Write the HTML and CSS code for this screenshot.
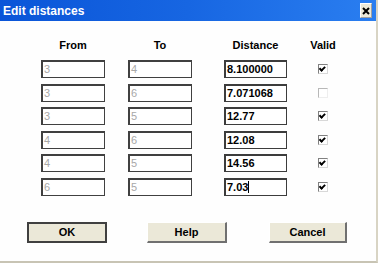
FILE: index.html
```html
<!DOCTYPE html>
<html>
<head>
<meta charset="utf-8">
<link rel="stylesheet" href="styles.css">
</head>
<body>
<div class="window">
  <div class="titlebar">
    <span class="title">Edit distances</span>
    <span class="close">
      <svg width="8" height="8" viewBox="0 0 8 8"><path d="M1 1 L7 7 M7 1 L1 7" stroke="#000" stroke-width="2"/></svg>
    </span>
  </div>
  <div class="content">
    <div class="table">
      <div class="hdr w-ft">From</div>
      <div class="hdr w-ft">To</div>
      <div class="hdr w-d">Distance</div>
      <div class="hdr w-v">Valid</div>

      <div class="box dis w-ft">3</div><div class="box dis w-ft">4</div><div class="box w-d">8.100000</div><div class="cb on"></div>
      <div class="box dis w-ft">3</div><div class="box dis w-ft">6</div><div class="box w-d">7.071068</div><div class="cb off"></div>
      <div class="box dis w-ft">3</div><div class="box dis w-ft">5</div><div class="box w-d">12.77</div><div class="cb on"></div>
      <div class="box dis w-ft">4</div><div class="box dis w-ft">6</div><div class="box w-d">12.08</div><div class="cb on"></div>
      <div class="box dis w-ft">4</div><div class="box dis w-ft">5</div><div class="box w-d">14.56</div><div class="cb on"></div>
      <div class="box dis w-ft">6</div><div class="box dis w-ft">5</div><div class="box w-d">7.03<span class="caret"></span></div><div class="cb on"></div>
    </div>
    <div class="buttons">
      <div class="btn default">OK</div>
      <div class="btn">Help</div>
      <div class="btn cancel">Cancel</div>
    </div>
  </div>
</div>
</body>
</html>
```
FILE: styles.css
```css
html, body {
  margin: 0;
  padding: 0;
}
body {
  width: 378px;
  height: 263px;
  overflow: hidden;
  background: #ffffff;
  font-family: "Liberation Sans", Arial, sans-serif;
}
.window {
  width: 376px;
  height: 261px;
  border-right: 2px solid #d8d4c4;
  border-bottom: 2px solid #c8c4b4;
  background: #fefefe;
  display: flex;
  flex-direction: column;
}
.titlebar {
  height: 21px;
  background: linear-gradient(to right, #0a55d8 0%, #1766e2 50%, #2a7ef0 100%);
  display: flex;
  align-items: center;
  justify-content: space-between;
  padding: 0 3px 0 3px;
  flex: none;
}
.title {
  color: #fff;
  font-weight: bold;
  font-size: 12px;
}
.close {
  width: 12px;
  height: 15px;
  background: #ece9d8;
  border: 1px solid #fff;
  border-right-color: #a0a0a0;
  border-bottom-color: #a0a0a0;
  box-sizing: border-box;
  display: flex;
  align-items: center;
  justify-content: center;
  margin-right: 1px;
}
.content {
  padding: 14px 0 0 0;
}
.table {
  display: grid;
  grid-template-columns: 87px 96px 94px 20px;
  grid-template-rows: 25px;
  grid-auto-rows: 23.6px;
  margin-left: 41px;
}
.hdr {
  font-weight: bold;
  font-size: 11px;
  color: #000;
  line-height: 20px;
  display: flex;
  justify-content: center;
  white-space: nowrap;
}
.w-ft { width: 64px; }
.w-d { width: 63px; }
.w-v { width: 10px; }
.box {
  height: 18px;
  box-sizing: border-box;
  border: 2px solid #3c3c3c;
  border-right-width: 1px;
  border-bottom-width: 1px;
  background: #fff;
  font-size: 11px;
  line-height: 15px;
  padding-left: 1px;
  color: #000;
  font-weight: bold;
}
.box.dis {
  color: #a8a8a8;
  font-weight: normal;
  border-color: #404040;
}
.caret {
  display: inline-block;
  width: 1px;
  height: 12px;
  background: #000;
  vertical-align: -2px;
}
.cb {
  width: 10px;
  height: 10px;
  box-sizing: border-box;
  border: 1px solid #808080;
  border-right-color: #d8d8d8;
  border-bottom-color: #d8d8d8;
  margin-top: 4px;
  background: #fff;
  position: relative;
}
.cb.off {
  border-color: #b8b8b8;
  border-right-color: #eeeeee;
  border-bottom-color: #eeeeee;
}
.cb.on::after {
  content: "";
  position: absolute;
  left: 1px;
  top: 0px;
  width: 4px;
  height: 2px;
  border-left: 2px solid #000;
  border-bottom: 2px solid #000;
  transform: translate(0, 1px) rotate(-45deg);
  transform-origin: 3px 3px;
}
.buttons {
  display: flex;
  margin: 20px 0 0 27px;
  gap: 40px;
}
.btn {
  width: 80px;
  height: 21px;
  box-sizing: border-box;
  background: #ebe8d8;
  border: 1px solid #ffffff;
  border-right: 2px solid #707070;
  border-bottom: 2px solid #707070;
  font-weight: bold;
  font-size: 11px;
  text-align: center;
  line-height: 18px;
  color: #000;
}
.btn.default {
  border: 2px solid #404040;
  line-height: 17px;
}
.btn.cancel {
  width: 78px;
  margin-left: 2px;
}
```
